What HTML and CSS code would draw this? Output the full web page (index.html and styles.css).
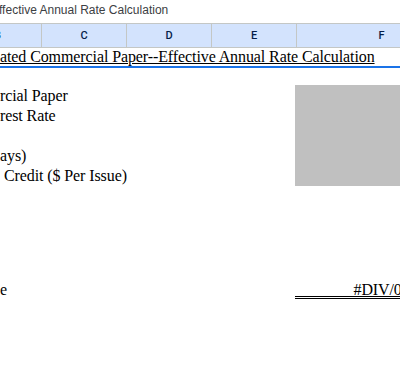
FILE: index.html
```html
<!DOCTYPE html>
<html lang="en">
<head>
  <meta charset="UTF-8" />
  <title>Effective Annual Rate Calculation</title>
  <link rel="stylesheet" href="styles.css">
</head>
<body>
  <!-- formula bar -->
  <div class="formula-bar">
    <span class="formula-text">Effective Annual Rate Calculation</span>
  </div>

  <!-- column letters -->
  <div class="col-headers">
    <div class="col col-b">B</div>
    <div class="col">C</div>
    <div class="col">D</div>
    <div class="col">E</div>
    <div class="col col-f">F</div>
  </div>

  <div class="sheet">
    <div class="title-row">
      <span class="title">ated Commercial Paper--Effective Annual Rate Calculation</span>
    </div>
    <div class="spacer"></div>

    <div class="input-block">
      <div class="labels">
        <div class="cell">rcial Paper</div>
        <div class="cell">rest Rate</div>
        <div class="cell"></div>
        <div class="cell">ays)</div>
        <div class="cell indent">Credit ($ Per Issue)</div>
      </div>
      <div class="input-box"></div>
    </div>

    <div class="gap"></div>

    <div class="result-row">
      <div class="result-label">e</div>
      <div class="result-value">#DIV/0!</div>
    </div>
  </div>
</body>
</html>
```

FILE: styles.css
```css
html, body {
  margin: 0;
  padding: 0;
  width: 400px;
  height: 368px;
  overflow: hidden;
  background: #fff;
}

.formula-bar {
  height: 23px;
  overflow: hidden;
  white-space: nowrap;
}
.formula-text {
  display: inline-block;
  margin-left: -9px;
  font-family: "Liberation Sans", Arial, sans-serif;
  font-size: 12px;
  line-height: 18px;
  color: #3c4043;
}

.col-headers {
  display: flex;
  height: 25px;
  box-sizing: border-box;
  border-top: 1px solid #c4c7c5;
  border-bottom: 1px solid #c4c7c5;
  background: #d3e3fd;
  white-space: nowrap;
}
.col {
  flex: none;
  width: 85px;
  box-sizing: border-box;
  border-right: 1px solid #c4c7c5;
  text-align: center;
  font-family: Roboto, "Liberation Sans", sans-serif;
  font-weight: 500;
  font-size: 11px;
  line-height: 23px;
  color: #041e49;
}
.col-b {
  width: 88px;
  margin-left: -46px;
}
.col-f {
  width: 170px;
}

.sheet {
  font-family: "Liberation Serif", "Times New Roman", serif;
  font-size: 16px;
  letter-spacing: -0.1px;
  color: #000;
  white-space: nowrap;
}

.title-row {
  height: 20px;
  box-sizing: border-box;
  border-bottom: 2px solid #1a73e8;
  line-height: 18px;
}
.title {
  text-decoration: underline;
}

.spacer {
  height: 17px;
}

.input-block {
  display: grid;
  grid-template-columns: 295px 1fr;
}
.cell {
  height: 20px;
  line-height: 20px;
  padding-top: 1px;
  box-sizing: border-box;
}
.indent {
  padding-left: 4px;
}
.input-box {
  background: #c0c0c0;
  height: 101px;
}

.gap {
  height: 97px;
}

.result-row {
  display: flex;
  height: 16px;
}
.result-label {
  width: 295px;
  flex: none;
  line-height: 13px;
}
.result-value {
  flex: none;
  width: 115px;
  box-sizing: border-box;
  padding-right: 3px;
  text-align: right;
  line-height: 13px;
  border-bottom: 3px double #000;
}
```
